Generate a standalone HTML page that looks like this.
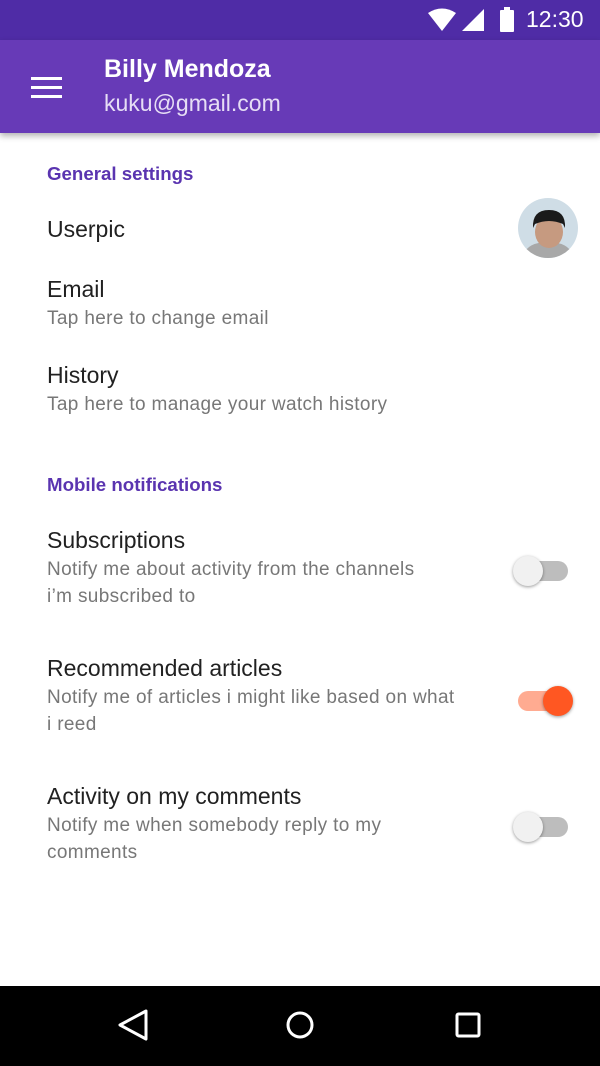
<!DOCTYPE html>
<html><head><meta charset="utf-8"><style>
*{margin:0;padding:0;box-sizing:border-box}
body{width:600px;height:1066px;background:#fff;font-family:"Liberation Sans",sans-serif;position:relative;overflow:hidden}
.abs{position:absolute}
.status{top:0;left:0;width:600px;height:40px;background:#4f2ca6}
.bar{top:40px;left:0;width:600px;height:93px;background:#673ab7;box-shadow:0 3px 6px rgba(0,0,0,.3)}
.h{color:#5a34b0;font-weight:bold;font-size:18.7px;left:47px}
.t{color:#212121;font-size:23px;left:47px}
.s{color:#777;font-size:19px;letter-spacing:0.35px;left:47px;line-height:27px}
.track{width:52px;height:20px;border-radius:10px;background:#bdbdbd}
.thumb{width:30px;height:30px;border-radius:50%;background:#f1f1f1;box-shadow:0 1px 3px rgba(0,0,0,.4)}
.nav{left:0;top:986px;width:600px;height:80px;background:#000}
</style></head><body>
<div class="abs status"></div>
<svg class="abs" style="left:428px;top:8px" width="60" height="24" viewBox="0 0 60 24">
<path d="M0 5 Q14 -4 28 5 L14 23 Z" fill="#fff"/>
<path d="M34 23 L56 23 L56 1 Z" fill="#fff"/>
</svg>
<div class="abs" style="left:500px;top:10px;width:14px;height:22px;background:#fff;border-radius:1px"></div>
<div class="abs" style="left:504px;top:7px;width:6px;height:4px;background:#fff"></div>
<div class="abs" style="left:526px;top:6px;color:#fff;font-size:23px">12:30</div>
<div class="abs bar"></div>
<div class="abs" style="left:31px;top:77px;width:31px;height:3px;background:#fff;box-shadow:0 9px 0 #fff,0 18px 0 #fff"></div>
<div class="abs" style="left:104px;top:55px;color:#fff;font-size:25px;font-weight:bold">Billy Mendoza</div>
<div class="abs" style="left:104px;top:90px;color:#e6def5;font-size:23px">kuku@gmail.com</div>

<div class="abs h" style="top:163px">General settings</div>
<div class="abs t" style="top:216px">Userpic</div>
<svg class="abs" style="left:518px;top:198px" width="60" height="60" viewBox="0 0 60 60">
<defs><clipPath id="c"><circle cx="30" cy="30" r="30"/></clipPath></defs>
<g clip-path="url(#c)"><rect width="60" height="60" fill="#cfdde6"/>
<path d="M4 60 Q8 44 30 44 Q52 44 56 60Z" fill="#a8a8a8"/>
<ellipse cx="31" cy="34" rx="14" ry="16" fill="#c69a80"/>
<path d="M15 30 Q14 12 31 12 Q48 12 47 30 L45 26 Q31 20 17 26Z" fill="#1a1a1a"/></g>
</svg>
<div class="abs t" style="top:276px">Email</div>
<div class="abs s" style="top:305px">Tap here to change email</div>
<div class="abs t" style="top:362px">History</div>
<div class="abs s" style="top:391px">Tap here to manage your watch history</div>

<div class="abs h" style="top:474px">Mobile notifications</div>
<div class="abs t" style="top:527px">Subscriptions</div>
<div class="abs s" style="top:556px">Notify me about activity from the channels<br>i’m subscribed to</div>
<div class="abs track" style="left:516px;top:561px"></div>
<div class="abs thumb" style="left:513px;top:556px"></div>

<div class="abs t" style="top:655px">Recommended articles</div>
<div class="abs s" style="top:684px">Notify me of articles i might like based on what<br>i reed</div>
<div class="abs track" style="left:518px;top:691px;background:#ffab91"></div>
<div class="abs thumb" style="left:543px;top:686px;background:#ff5722"></div>

<div class="abs t" style="top:783px">Activity on my comments</div>
<div class="abs s" style="top:812px">Notify me when somebody reply to my<br>comments</div>
<div class="abs track" style="left:516px;top:817px"></div>
<div class="abs thumb" style="left:513px;top:812px"></div>

<div class="abs nav"></div>
<svg class="abs" style="left:0;top:986px" width="600" height="80" viewBox="0 0 600 80">
<path d="M146 25 L120 39 L146 53 Z" fill="none" stroke="#fff" stroke-width="3" stroke-linejoin="round"/>
<circle cx="300" cy="39" r="12" fill="none" stroke="#fff" stroke-width="3"/>
<rect x="457" y="28" width="22" height="22" rx="1.5" fill="none" stroke="#fff" stroke-width="3"/>
</svg>
</body></html>
